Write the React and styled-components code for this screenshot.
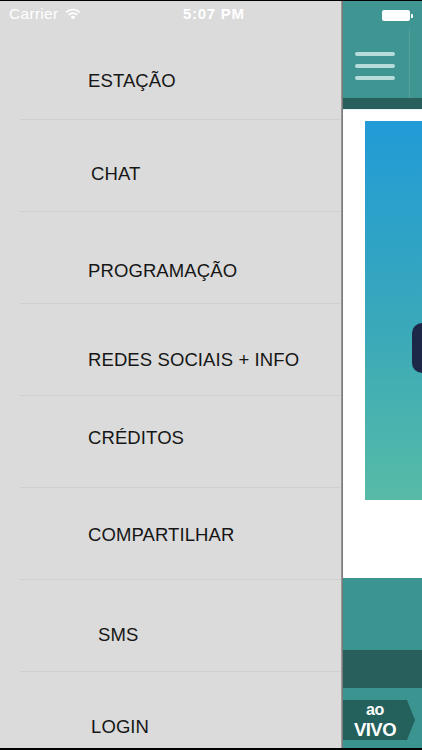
import React from "react";
import styled, { createGlobalStyle } from "styled-components";

const Global = createGlobalStyle`
  html, body { margin: 0; padding: 0; background: #000; }
  body { font-family: "Liberation Sans", Arial, sans-serif; }
  * { box-sizing: border-box; }
`;

const Screen = styled.div`
  position: relative;
  width: 422px;
  height: 750px;
  overflow: hidden;
  display: flex;
  border-top: 1px solid #000;
  border-bottom: 2px solid #000;
  background: #000;
`;

const Menu = styled.nav`
  width: 341px;
  flex-shrink: 0;
  background: #dbdbdb;
  padding-top: 27px;
  display: flex;
  flex-direction: column;
`;

const MenuRow = styled.div`
  height: 92px;
  flex-shrink: 0;
  margin-left: 20px;
  border-bottom: ${(p) => (p.$last ? "none" : "1px solid #cfcfcf")};
`;

const MenuLabel = styled.div`
  margin-top: ${(p) => p.$top}px;
  padding-left: ${(p) => p.$left - 20}px;
  font-size: 18.5px;
  line-height: 22px;
  color: #161616;
  letter-spacing: 0.1px;
`;

const Edge = styled.div`
  width: 2px;
  flex-shrink: 0;
  background: linear-gradient(to right, #a8a8a8, #6a6a6a);
`;

const Main = styled.main`
  flex: 1;
  display: flex;
  flex-direction: column;
`;

const Header = styled.header`
  height: 97px;
  flex-shrink: 0;
  background: #3e9592;
  display: flex;
  align-items: flex-start;
  padding-left: 12px;
`;

const Burger = styled.div`
  margin-top: 51px;
  width: 40px;
  display: flex;
  flex-direction: column;
  gap: 8px;
`;

const BurgerBar = styled.span`
  display: block;
  height: 4px;
  border-radius: 2px;
  background: #b6dcdb;
`;

const HeaderDivider = styled.div`
  margin-left: 14px;
  margin-top: 27px;
  width: 1px;
  height: 70px;
  background: #52a19e;
`;

const DarkStrip = styled.div`
  height: ${(p) => p.$h}px;
  flex-shrink: 0;
  background: #285e5c;
`;

const Content = styled.section`
  height: 469px;
  flex-shrink: 0;
  background: #fff;
  border-top: 1px solid #e4f1f0;
  padding: 11px 0 0 22px;
`;

const Poster = styled.div`
  position: relative;
  height: 379px;
  background: linear-gradient(to bottom, #219bd7 0%, #3aa9b9 55%, #57bba6 100%);
`;

const PosterTab = styled.div`
  position: absolute;
  left: 47px;
  top: 202px;
  width: 30px;
  height: 50px;
  border-radius: 10px 0 0 10px;
  background: #1d2747;
`;

const TealBand = styled.div`
  height: ${(p) => p.$h}px;
  flex-shrink: 0;
  background: #3c9491;
`;

const Footer = styled.footer`
  flex: 1;
  background: #3c9491;
  padding-top: 12px;
`;

const LiveBadge = styled.div`
  width: 72px;
  height: 40px;
  background: #24605c;
  clip-path: polygon(0 0, 64px 0, 72px 50%, 64px 100%, 0 100%);
  display: flex;
  flex-direction: column;
  align-items: center;
  justify-content: center;
  padding-right: 8px;
  color: #fff;
  font-weight: 700;
`;

const LiveTop = styled.span`
  font-size: 16px;
  line-height: 18px;
  letter-spacing: -0.3px;
`;

const LiveBottom = styled.span`
  font-size: 18.5px;
  line-height: 21px;
  letter-spacing: -0.5px;
`;

const StatusBar = styled.div`
  position: absolute;
  left: 0;
  top: 1px;
  width: 422px;
  height: 20px;
  display: flex;
  align-items: center;
  color: #fff;
  font-size: 15px;
`;

const Carrier = styled.div`
  position: absolute;
  left: 9px;
  top: 3px;
  display: flex;
  align-items: center;
  gap: 7px;
  font-size: 15.5px;
  letter-spacing: 0.3px;
`;

const Clock = styled.div`
  position: absolute;
  left: 183px;
  top: 3px;
  font-weight: 700;
  letter-spacing: 0.7px;
`;

const Battery = styled.div`
  position: absolute;
  left: 382px;
  top: 8px;
  display: flex;
  align-items: center;
  gap: 1px;
`;

const BatteryBody = styled.div`
  width: 28px;
  height: 11px;
  border-radius: 2px;
  background: #fff;
`;

const BatteryNub = styled.div`
  width: 2px;
  height: 4px;
  border-radius: 0 1px 1px 0;
  background: #fff;
`;

const items = [
  { label: "ESTAÇÃO", left: 88, top: 42 },
  { label: "CHAT", left: 91, top: 43 },
  { label: "PROGRAMAÇÃO", left: 88, top: 48 },
  { label: "REDES SOCIAIS + INFO", left: 88, top: 45 },
  { label: "CRÉDITOS", left: 88, top: 31 },
  { label: "COMPARTILHAR", left: 88, top: 36 },
  { label: "SMS", left: 98, top: 44 },
  { label: "LOGIN", left: 91, top: 44 },
];

const Wifi = () => (
  <svg width="16" height="12" viewBox="0 0 16 12">
    <path d="M8 11.5 L5.6 8.9 A3.4 3.4 0 0 1 10.4 8.9 Z" fill="#fff" />
    <path d="M3.7 6.9 A6.1 6.1 0 0 1 12.3 6.9" stroke="#fff" strokeWidth="1.7" fill="none" />
    <path d="M1.2 4.3 A9.6 9.6 0 0 1 14.8 4.3" stroke="#fff" strokeWidth="1.7" fill="none" />
  </svg>
);

export default function App() {
  return (
    <>
      <Global />
      <Screen>
        <Menu>
          {items.map((it, i) => (
            <MenuRow key={it.label} $last={i === items.length - 1}>
              <MenuLabel $left={it.left} $top={it.top}>
                {it.label}
              </MenuLabel>
            </MenuRow>
          ))}
        </Menu>
        <Edge />
        <Main>
          <Header>
            <Burger>
              <BurgerBar />
              <BurgerBar />
              <BurgerBar />
            </Burger>
            <HeaderDivider />
          </Header>
          <DarkStrip $h={11} />
          <Content>
            <Poster>
              <PosterTab />
            </Poster>
          </Content>
          <TealBand $h={72} />
          <DarkStrip $h={38} />
          <Footer>
            <LiveBadge>
              <LiveTop>ao</LiveTop>
              <LiveBottom>VIVO</LiveBottom>
            </LiveBadge>
          </Footer>
        </Main>
        <StatusBar>
          <Carrier>
            Carrier
            <Wifi />
          </Carrier>
          <Clock>5:07 PM</Clock>
          <Battery>
            <BatteryBody />
            <BatteryNub />
          </Battery>
        </StatusBar>
      </Screen>
    </>
  );
}
